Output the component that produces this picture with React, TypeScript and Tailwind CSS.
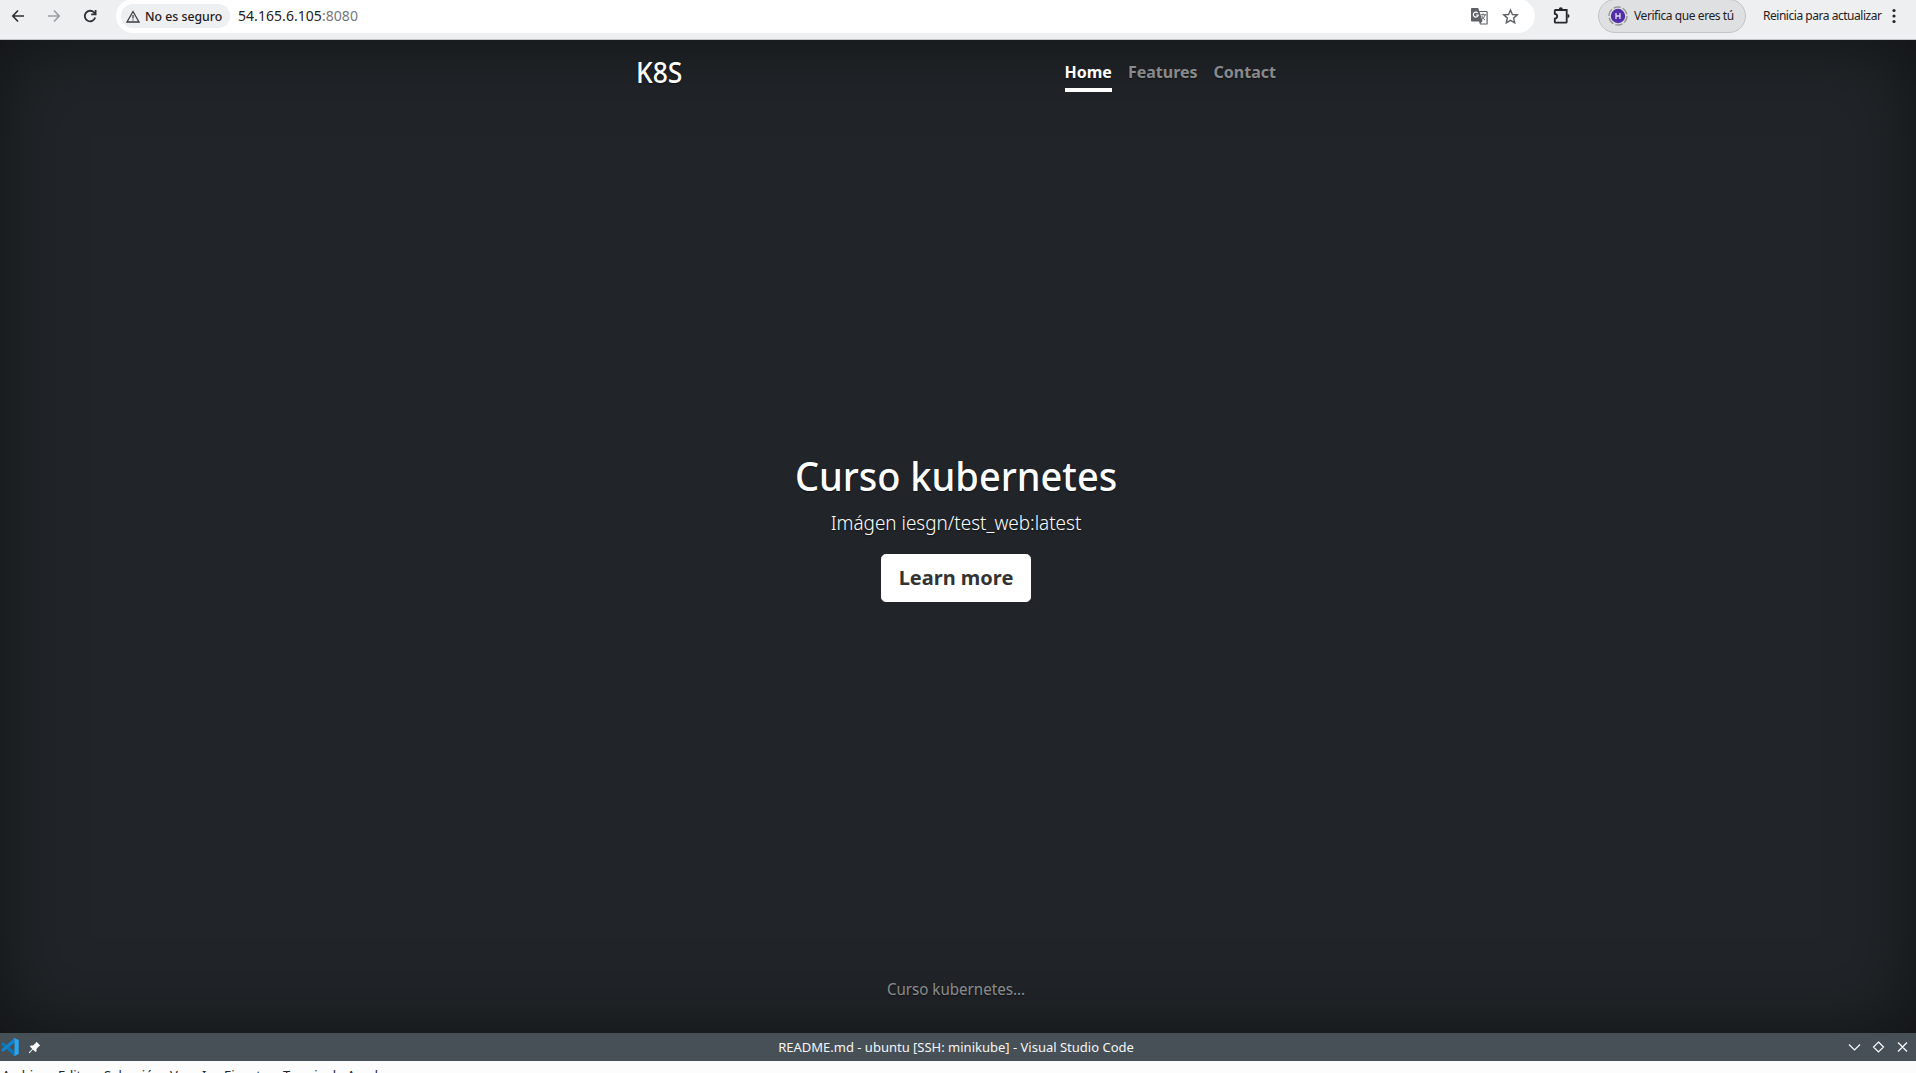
import React from "react";

const menuItems = [
  { label: "Archivo", width: "w-14" },
  { label: "Editar", width: "w-[46px]" },
  { label: "Selección", width: "w-[66px]" },
  { label: "Ver", width: "w-8" },
  { label: "Ir", width: "w-[22px]" },
  { label: "Ejecutar", width: "w-[59px]" },
  { label: "Terminal", width: "w-16" },
  { label: "Ayuda", width: "w-12" },
];

function BrowserBar() {
  return (
    <header className="flex h-10 shrink-0 border-b border-[#c4c6c9] bg-[#eeeff1] text-[#1f2023]">
      <div className="flex h-8 w-[116px] shrink-0 items-center pl-[10px]">
        <svg width="16" height="16" viewBox="0 0 16 16" fill="none" stroke="#303134" strokeWidth="1.7">
          <path d="M14 8H3M8 2.5 2.8 8 8 13.5" />
        </svg>
        <svg className="ml-5" width="16" height="16" viewBox="0 0 16 16" fill="none" stroke="#9c9ea1" strokeWidth="1.7">
          <path d="M2 8h11M8 2.5 13.2 8 8 13.5" />
        </svg>
        <svg className="ml-5" width="16" height="16" viewBox="0 0 16 16" fill="none" stroke="#303134" strokeWidth="1.8">
          <path d="M13.2 9.6A5.3 5.3 0 1 1 12 4.4l1.2 1.2" />
          <path d="M13.6 2v4.3H9.2" />
        </svg>
      </div>
      <div className="-mt-px flex h-[34px] w-[1419px] shrink-0 items-center rounded-full bg-white pl-[5px]">
        <div className="flex h-6 w-[109px] shrink-0 items-center rounded-full bg-[#eeeff1] pl-[5px]">
          <svg className="shrink-0" width="14" height="13" viewBox="0 0 14 13" fill="none" stroke="#3c3d40" strokeWidth="1.3">
            <path d="M7 1.5 13 12H1Z" />
            <path d="M7 5v3.5M7 9.4v1.2" />
          </svg>
          <span className="ml-[5px] origin-left scale-x-[0.945] whitespace-nowrap text-[13px] font-medium leading-6">No es seguro</span>
        </div>
        <span className="ml-2 text-[14px] leading-6 tracking-[0.05px]">
          54.165.6.105<span className="text-[#75777a]">:8080</span>
        </span>
        <svg className="ml-auto" width="17" height="17" viewBox="0 0 17 17">
          <path d="M1 0h6.2l1 3H15.500a1.200 1.200 0 0 1 1.200 1.200v11.200a1.200 1.200 0 0 1-1.200 1.200H9l-1-3H1a1 1 0 0 1-1-1V1a1 1 0 0 1 1-1Z" fill="#5f6164" />
          <path d="m8.600 4 2.900 9-2 2.400h6V4Z" fill="#fff" />
          <path d="M6.800 5A2.500 2.500 0 1 0 7.300 7H5" fill="none" stroke="#fff" strokeWidth="1.200" />
          <path d="M9.500 6.800h5.500M12 5.500v1.300M14 6.800c-.5 2-1.500 3.500-3.200 4.600M10.800 8c.7 1.600 1.800 3 3.200 4" fill="none" stroke="#5f6164" strokeWidth="1" />
        </svg>
        <svg className="ml-[14px] mr-[16px]" width="17" height="17" viewBox="0 0 17 17" fill="none" stroke="#5f6164" strokeWidth="1.4">
          <path d="m8.500 2 1.900 4.500 4.900.4-3.700 3.200 1.100 4.700-4.200-2.500-4.200 2.500 1.100-4.700-3.700-3.200 4.900-.4Z" />
        </svg>
      </div>
      <svg className="ml-[18px] mt-[7px] shrink-0" width="18" height="18" viewBox="0 0 18 18">
        <path d="M2.500 3h11.200v11.900a.8.800 0 0 1-.8.800H2.500a.7.700 0 0 1-.7-.7v-3.300c3.200-.2 3.200-4.600 0-4.800V3.700a.7.700 0 0 1 .7-.7Z" fill="none" stroke="#25272a" strokeWidth="1.800" />
        <path d="M5.800 2.300a2 2 0 0 1 4 0ZM14.500 6.900a2 2 0 0 1 0 4Z" fill="#25272a" />
      </svg>
      <div className="-mt-px ml-[27px] flex h-[34px] w-[148px] shrink-0 items-center rounded-full border border-[#c3c4c7] bg-[#dfe0e2] pl-[9px]">
        <svg className="shrink-0" width="20" height="20" viewBox="0 0 20 20">
          <circle cx="10" cy="10" r="9" fill="none" stroke="#929497" strokeWidth="1.300" strokeDasharray="7.400 2" />
          <circle cx="10" cy="10" r="7.200" fill="#512da8" />
          <path d="M8 7v6M12 7v6M8 10h4" fill="none" stroke="#e5ddf5" strokeWidth="1.300" />
        </svg>
        <span className="ml-[6px] whitespace-nowrap text-[12px] leading-6 tracking-[-0.420px]">Verifica que eres tú</span>
      </div>
      <span className="ml-[17px] h-8 whitespace-nowrap text-[12px] leading-8 tracking-[-0.470px]">Reinicia para actualizar</span>
      <svg className="ml-auto mr-[20px] mt-2" width="4" height="16" viewBox="0 0 4 16" fill="#25272a">
        <circle cx="2" cy="2.500" r="1.600" />
        <circle cx="2" cy="8" r="1.600" />
        <circle cx="2" cy="13.500" r="1.600" />
      </svg>
    </header>
  );
}

function CoverPage() {
  return (
    <div className="-ml-1 flex h-[993px] w-[1920px] shrink-0 justify-center bg-[#212529] text-white shadow-[inset_0_0_80px_rgba(0,0,0,0.5)] [text-shadow:0_0.8px_1.6px_rgba(0,0,0,0.5)]">
      <div className="flex w-[672px] flex-col p-4 text-center">
        <div className="mb-auto flex h-9 justify-between">
          <h3 className="origin-left scale-x-[0.945] text-[28px] font-medium leading-[33.6px]">K8S</h3>
          <nav className="flex gap-4 font-bold leading-6 text-white/50">
            <a className="border-b-4 border-white py-1 text-white">Home</a>
            <a className="py-1">Features</a>
            <a className="py-1">Contact</a>
          </nav>
        </div>
        <main className="px-4">
          <h1 className="mb-2 scale-x-[0.949] text-[40px] font-medium leading-[48px]">Curso kubernetes</h1>
          <p className="mb-4 scale-x-[0.945] text-[20px] font-light leading-[30px]">Imágen iesgn/test_web:latest</p>
          <p className="mb-4 flex justify-center">
            <a className="rounded-[4.800px] border border-white bg-white px-[17px] py-2 text-[20px] font-bold leading-[30px] text-[#333] [text-shadow:none]">Learn more</a>
          </p>
        </main>
        <footer className="mt-auto text-white/50">
          <p className="mb-4 scale-x-[0.945] leading-6">Curso kubernetes...</p>
        </footer>
      </div>
    </div>
  );
}

function EditorWindow() {
  return (
    <section className="flex flex-1 flex-col overflow-hidden bg-[#fcfcfc]">
      <div className="grid h-7 shrink-0 grid-cols-[1fr_auto_1fr] items-center bg-[#475057] text-[#f5f6f6]">
        <div className="flex items-center pl-[1px]">
          <svg width="18" height="18" viewBox="0 0 18 18">
            <path d="M.4 5.600 2 4.300l11.500 9V18L.5 6.500Z" fill="#0a78bd" />
            <path d="M.4 12.400 2 13.700l11.500-9V0L.5 11.500Z" fill="#0c86d2" />
            <path d="m13.200 0 4.500 2v14l-4.500 2-.8-.5 1.100-.7V1.200l-1.100-.7Z" fill="#29a6f0" />
          </svg>
          <svg className="ml-[9px]" width="13" height="13" viewBox="0 0 13 13" fill="#fcfcfc">
            <path d="M8.500.800 12.200 4.500 11 5.200 8.500 8v2.200l-1 .8-2.600-2.500L1.500 12.300.700 11.500l3.600-3.600L1.900 5.500l.9-.9h2.200l2.700-2.700Z" />
          </svg>
        </div>
        <span className="whitespace-nowrap pr-1 text-[13px] leading-7">README.md - ubuntu [SSH: minikube] - Visual Studio Code</span>
        <svg className="ml-auto mr-[8px]" width="60" height="14" viewBox="0 0 60 14" fill="none" stroke="#fcfcfc" strokeWidth="1.200">
          <path d="m1 4.500 5.500 5.500L12 4.500M30.500 2l5 5-5 5-5-5ZM50 2.500l9 9M59 2.500l-9 9" />
        </svg>
      </div>
      <div className="flex pl-[2px] pt-[5px] text-[13px] leading-[18px] text-[#232629]">
        {menuItems.map(({ label, width }) => (
          <span key={label} className={`${width} shrink-0`}>{label}</span>
        ))}
      </div>
    </section>
  );
}

export default function App() {
  return (
    <div className="flex h-[1073px] w-[1916px] flex-col overflow-hidden font-['Noto_Sans',sans-serif]">
      <BrowserBar />
      <CoverPage />
      <EditorWindow />
    </div>
  );
}
